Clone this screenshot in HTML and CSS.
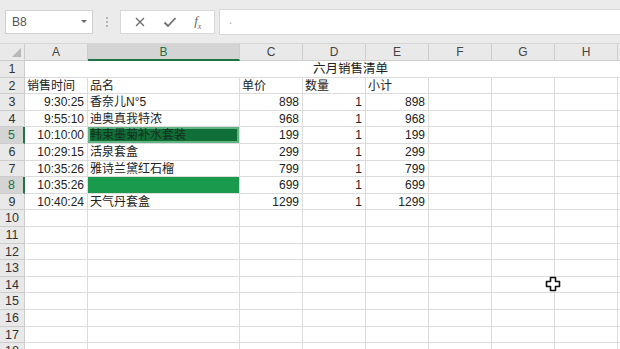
FILE: index.html
```html
<!DOCTYPE html>
<html lang="zh-CN">
<head>
  <meta charset="UTF-8">
  <title>六月销售清单</title>
  <link rel="stylesheet" href="styles.css">
</head>
<body>
  <div class="app">
    <div class="formula-bar">
      <div class="name-box">
        <span>B8</span>
        <span class="drop"></span>
      </div>
      <div class="grip"><i></i><i></i><i></i></div>
      <div class="fx-buttons">
        <svg width="12" height="12" viewBox="0 0 12 12"><path d="M2 2 L10 10 M10 2 L2 10" stroke="#6f6f6f" stroke-width="1.4" fill="none"/></svg>
        <svg width="14" height="12" viewBox="0 0 14 12"><path d="M1.5 6.5 L5 10 L12.5 2" stroke="#6f6f6f" stroke-width="1.8" fill="none"/></svg>
        <span class="fx">f<sub>x</sub></span>
      </div>
      <div class="formula-input">.</div>
    </div>

    <div class="sheet" id="sheet">
      <div class="corner"><span class="tri"></span></div>
      <div class="col-head">A</div>
      <div class="col-head active">B</div>
      <div class="col-head">C</div>
      <div class="col-head">D</div>
      <div class="col-head">E</div>
      <div class="col-head">F</div>
      <div class="col-head">G</div>
      <div class="col-head">H</div>
      <div class="col-head"></div>
    </div>

    <svg class="cursor" width="16" height="16" viewBox="0 0 16 16">
      <path d="M5.5 1.5 H10.5 V5.5 H14.5 V10.5 H10.5 V14.5 H5.5 V10.5 H1.5 V5.5 H5.5 Z" fill="#fff" stroke="#111" stroke-width="1.6" stroke-linejoin="round"/>
    </svg>
  </div>

  <script>
    const sheet = document.getElementById("sheet");

    const data = [
      ["销售时间", "品名", "单价", "数量", "小计"],
      ["9:30:25", "香奈儿N°5", 898, 1, 898],
      ["9:55:10", "迪奥真我特浓", 968, 1, 968],
      ["10:10:00", "韩束墨菊补水套装", 199, 1, 199],
      ["10:29:15", "活泉套盒", 299, 1, 299],
      ["10:35:26", "雅诗兰黛红石榴", 799, 1, 799],
      ["10:35:26", "", 699, 1, 699],
      ["10:40:24", "天气丹套盒", 1299, 1, 1299]
    ];

    function addCell(text, cls) {
      const cell = document.createElement("div");
      cell.className = cls;
      cell.textContent = text;
      sheet.appendChild(cell);
      return cell;
    }

    // row 1: merged title
    addCell("1", "row-head");
    addCell("六月销售清单", "cell title");

    for (let r = 2; r <= 18; r++) {
      const head = addCell(r, "row-head");
      if (r === 5 || r === 8) head.classList.add("hl");

      const values = data[r - 2] || [];
      for (let c = 0; c < 9; c++) {
        const v = values[c];
        let cls = "cell";
        if (r > 2 && (c === 0 || typeof v === "number")) cls += " num";
        if (c === 1 && r === 5) cls += " fill-dark";
        if (c === 1 && r === 8) cls += " fill-active";
        addCell(v === undefined ? "" : v, cls);
      }
    }
  </script>
</body>
</html>
```

FILE: styles.css
```css
:root {
  --excel-green: #217346;
  --grid-line: #dcdcdc;
  --head-bg: #e9e9e9;
  --head-line: #cdcdcd;
}

body {
  margin: 0;
  font-family: "Liberation Sans", "Noto Sans CJK SC", sans-serif;
  font-size: 12px;
  color: #222;
  background: #fff;
  overflow: hidden;
}

.app {
  position: relative;
  width: 620px;
  height: 349px;
  overflow: hidden;
}

/* formula bar */
.formula-bar {
  display: flex;
  align-items: center;
  height: 44px;
  background: #ebebeb;
  box-sizing: border-box;
  border-bottom: 1px solid #d6d6d6;
}

.name-box {
  display: flex;
  align-items: center;
  justify-content: space-between;
  width: 88px;
  height: 24px;
  margin-left: 5px;
  padding: 0 5px 0 6px;
  box-sizing: border-box;
  background: #fff;
  border: 1px solid #d0d0d0;
  color: #555;
}

.drop {
  width: 0;
  height: 0;
  border-left: 3px solid transparent;
  border-right: 3px solid transparent;
  border-top: 3px solid #666;
}

.grip {
  display: flex;
  flex-direction: column;
  gap: 2px;
  width: 27px;
  align-items: center;
}

.grip i {
  display: block;
  width: 2px;
  height: 2px;
  background: #b5b5b5;
}

.fx-buttons {
  display: flex;
  align-items: center;
  justify-content: space-around;
  width: 95px;
  height: 24px;
  box-sizing: border-box;
  background: #fff;
  border: 1px solid #d8d8d8;
  padding: 0 4px;
}

.fx {
  font-family: "Liberation Serif", serif;
  font-style: italic;
  font-size: 13px;
  color: #666;
}

.fx sub {
  font-size: 8px;
}

.formula-input {
  flex: 1;
  height: 24px;
  margin-left: 4px;
  padding-left: 9px;
  line-height: 20px;
  background: #fff;
  border: 1px solid #d8d8d8;
  border-right: none;
  color: #aaa;
}

/* grid */
.sheet {
  display: grid;
  grid-template-columns: 25px 63px 152px 63px 63px 63px 63px 63px 63px 63px;
  grid-template-rows: 17px;
  grid-auto-rows: 16.6px;
}

.corner,
.col-head,
.row-head {
  background: var(--head-bg);
  color: #444;
  box-sizing: border-box;
  border-right: 1px solid var(--head-line);
  border-bottom: 1px solid var(--head-line);
}

.corner {
  position: relative;
}

.tri {
  position: absolute;
  right: 3px;
  bottom: 3px;
  width: 0;
  height: 0;
  border-left: 9px solid transparent;
  border-bottom: 9px solid #b8b8b8;
}

.col-head {
  text-align: center;
  line-height: 16px;
  font-size: 12px;
}

.col-head.active {
  background: #d4d4d4;
  color: var(--excel-green);
  border-bottom: 2px solid var(--excel-green);
}

.row-head {
  text-align: center;
  line-height: 16px;
  font-size: 12.5px;
  color: #333;
}

.row-head.hl {
  background: #d4d4d4;
  color: var(--excel-green);
  border-right: 2px solid var(--excel-green);
}

.cell {
  box-sizing: border-box;
  border-right: 1px solid var(--grid-line);
  border-bottom: 1px solid var(--grid-line);
  padding: 0 2px;
  line-height: 16px;
  white-space: nowrap;
  overflow: visible;
}

.cell.num {
  text-align: right;
  padding-right: 3px;
}

.cell.title {
  grid-column: 2 / 11;
  border-right: none;
  padding-left: 288px;
  font-size: 12.5px;
}

.fill-dark {
  background: #0f6f36;
  color: #16301f;
  box-shadow: inset 0 0 0 2px #62b383;
}

.fill-active {
  background: #199a4d;
}

.cursor {
  position: absolute;
  left: 545px;
  top: 276px;
}
```
